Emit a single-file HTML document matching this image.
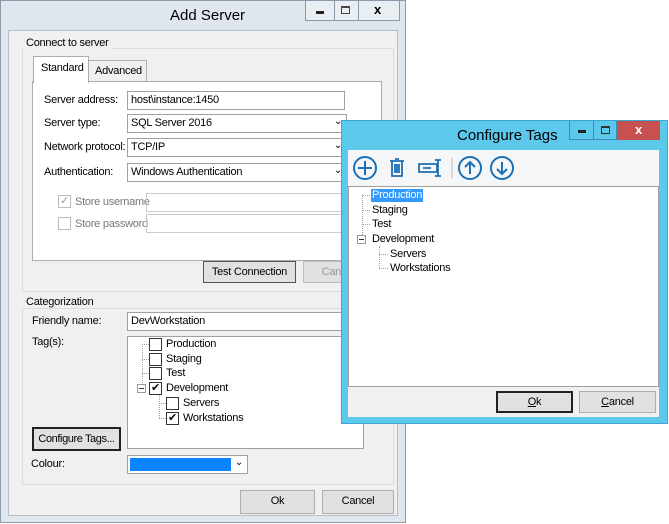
<!DOCTYPE html>
<html><head><meta charset="utf-8"><style>
*{box-sizing:border-box;margin:0;padding:0}
body{width:669px;height:524px;background:#fff;position:relative;overflow:hidden;font-family:"Liberation Sans",sans-serif;font-size:11px;letter-spacing:-0.25px;color:#000}
.a{position:absolute;white-space:nowrap}
.tb{position:absolute;background:#fff;border:1px solid #a0a0a0;height:19px;padding:2px 3px;white-space:nowrap;overflow:hidden}
.btn{position:absolute;background:#e1e1e1;border:1px solid #adadad;text-align:center;line-height:20px;white-space:nowrap}
.cb{position:absolute;width:13px;height:13px;border:1px solid #333;background:#fff;font-size:11px;line-height:11px;text-align:center}
.chev{position:absolute;right:4px;top:1px;font-size:10px}
.dot{position:absolute;border-color:#a0a0a0;border-style:dotted;border-width:0}
</style></head><body>
<!-- Add Server -->
<div class="a" style="left:0;top:0;width:406px;height:523px;background:#dfe6ee;border:1px solid #8a99aa"></div>
<div class="a" style="left:170px;top:7px;font-size:15px;letter-spacing:0">Add Server</div>
<div class="a" style="left:305px;top:0px;width:95px;height:21px;border:1px solid #8a99aa;background:#e9eef3"></div>
<div class="a" style="left:334px;top:0px;width:1px;height:21px;background:#8a99aa"></div>
<div class="a" style="left:358px;top:0px;width:1px;height:21px;background:#8a99aa"></div>
<div class="a" style="left:316px;top:11px;width:8px;height:3px;background:#222"></div>
<div class="a" style="left:341px;top:6px;width:9px;height:8px;border:1px solid #444;border-top-width:2px"></div>
<div class="a" style="left:374px;top:2px;font-size:13px;font-weight:bold">x</div>
<div class="a" style="left:8px;top:30px;width:390px;height:486px;background:#f0f0f0;border:1px solid #b5bfca"></div>
<div class="a" style="left:22px;top:48px;width:372px;height:244px;border:1px solid #dcdcdc"></div>
<div class="a" style="left:24px;top:37px;background:#f0f0f0;padding:0 2px">Connect to server</div>
<div class="a" style="left:32px;top:81px;width:350px;height:180px;background:#fff;border:1px solid #adadad"></div>
<div class="a" style="left:88px;top:60px;width:59px;height:22px;background:#f0f0f0;border:1px solid #adadad;padding:4px 0 0 6px">Advanced</div>
<div class="a" style="left:33px;top:56px;width:56px;height:27px;background:#fff;border:1px solid #adadad;border-bottom:none;padding:5px 0 0 7px">Standard</div>
<div class="a" style="left:44px;top:94px">Server address:</div>
<div class="tb" style="left:127px;top:91px;width:218px">host\instance:1450</div>
<div class="a" style="left:44px;top:117px">Server type:</div>
<div class="tb" style="left:127px;top:114px;width:220px">SQL Server 2016<span class="chev">&#8964;</span></div>
<div class="a" style="left:44px;top:141px">Network protocol:</div>
<div class="tb" style="left:127px;top:138px;width:220px">TCP/IP<span class="chev">&#8964;</span></div>
<div class="a" style="left:44px;top:166px">Authentication:</div>
<div class="tb" style="left:127px;top:163px;width:220px">Windows Authentication<span class="chev">&#8964;</span></div>
<div class="cb" style="left:58px;top:195px;border-color:#bbb;color:#999">&#10003;</div>
<div class="a" style="left:75px;top:196px;color:#777">Store username</div>
<div class="a" style="left:146px;top:193px;width:210px;height:19px;border:1px solid #ccc"></div>
<div class="cb" style="left:58px;top:217px;border-color:#bbb"></div>
<div class="a" style="left:75px;top:218px;color:#777">Store password</div>
<div class="a" style="left:146px;top:214px;width:210px;height:19px;border:1px solid #ccc"></div>
<div class="btn" style="left:203px;top:261px;width:93px;height:22px;border-color:#555">Test Connection</div>
<div class="btn" style="left:303px;top:261px;width:70px;height:22px;color:#999;border-color:#bbb">Cancel</div>
<div class="a" style="left:22px;top:308px;width:372px;height:177px;border:1px solid #dcdcdc"></div>
<div class="a" style="left:24px;top:296px;background:#f0f0f0;padding:0 2px">Categorization</div>
<div class="a" style="left:32px;top:315px">Friendly name:</div>
<div class="tb" style="left:127px;top:312px;width:230px">DevWorkstation</div>
<div class="a" style="left:32px;top:336px">Tag(s):</div>
<div class="a" style="left:127px;top:336px;width:237px;height:113px;background:#fff;border:1px solid #a0a0a0"></div>
<div class="dot" style="left:142px;top:344px;height:45px;border-left-width:1px"></div>
<div class="dot" style="left:142px;top:344px;width:7px;border-top-width:1px"></div>
<div class="dot" style="left:142px;top:359px;width:7px;border-top-width:1px"></div>
<div class="dot" style="left:142px;top:373px;width:7px;border-top-width:1px"></div>
<div class="dot" style="left:159px;top:395px;height:23px;border-left-width:1px"></div>
<div class="dot" style="left:159px;top:403px;width:7px;border-top-width:1px"></div>
<div class="dot" style="left:159px;top:418px;width:7px;border-top-width:1px"></div>
<div class="a" style="left:137px;top:384px;width:9px;height:9px;border:1px solid #999;background:#fff"><div style="margin:3px 1px;height:1px;background:#333"></div></div>
<div class="cb" style="left:149px;top:338px"></div><div class="a" style="left:166px;top:338px">Production</div>
<div class="cb" style="left:149px;top:353px"></div><div class="a" style="left:166px;top:353px">Staging</div>
<div class="cb" style="left:149px;top:367px"></div><div class="a" style="left:166px;top:367px">Test</div>
<div class="cb" style="left:149px;top:382px">&#10004;</div><div class="a" style="left:166px;top:382px">Development</div>
<div class="cb" style="left:166px;top:397px"></div><div class="a" style="left:183px;top:397px">Servers</div>
<div class="cb" style="left:166px;top:412px">&#10004;</div><div class="a" style="left:183px;top:412px">Workstations</div>
<div class="btn" style="left:32px;top:427px;width:89px;height:24px;border:2px solid #222;line-height:20px;letter-spacing:-0.4px">Configure Tags...</div>
<div class="a" style="left:31px;top:458px">Colour:</div>
<div class="a" style="left:127px;top:455px;width:121px;height:19px;background:#fff;border:1px solid #a0a0a0"><div style="position:absolute;left:2px;top:2px;width:101px;height:13px;background:#0a84ff"></div><span class="chev" style="top:1px">&#8964;</span></div>
<div class="btn" style="left:240px;top:490px;width:75px;height:24px">Ok</div>
<div class="btn" style="left:322px;top:490px;width:72px;height:24px">Cancel</div>

<!-- Configure Tags -->
<div class="a" style="left:341px;top:120px;width:327px;height:304px;background:#5bc8ec;border:1px solid #3aa7d0"></div>
<div class="a" style="left:457px;top:127px;font-size:15px;letter-spacing:0">Configure Tags</div>
<div class="a" style="left:569px;top:121px;width:48px;height:19px;border:1px solid #3a8fb8;border-top:none"></div>
<div class="a" style="left:593px;top:121px;width:1px;height:19px;background:#3a8fb8"></div>
<div class="a" style="left:578px;top:130px;width:8px;height:3px;background:#222"></div>
<div class="a" style="left:601px;top:126px;width:9px;height:8px;border:1px solid #333;border-top-width:2px"></div>
<div class="a" style="left:617px;top:121px;width:43px;height:19px;background:#c75050;color:#fff;font-weight:bold;font-size:13px;text-align:center;line-height:17px">x</div>
<div class="a" style="left:348px;top:150px;width:311px;height:36px;background:#f5f6f7"></div>
<svg class="a" style="left:348px;top:150px" width="170" height="36" fill="none" stroke="#1c6fb4" stroke-width="2">
<circle cx="17" cy="18" r="11"/><path d="M17 11v14M10 18h14"/>
<path d="M42 11h14M44 11v15h10V11M47 9h4M47 14v9M49 14v9M51 14v9" stroke-width="1.8"/>
<path d="M71 14h18v8H71zM75 18h8M90 10v16M87 10h6M87 26h6" stroke-width="1.8"/>
<path d="M104 8v20" stroke="#bbb" stroke-width="1"/>
<circle cx="122" cy="18" r="11"/><path d="M122 24V12M117 17l5-5 5 5"/>
<circle cx="154" cy="18" r="11"/><path d="M154 12v12M149 19l5 5 5-5"/>
</svg>
<div class="a" style="left:348px;top:186px;width:311px;height:201px;background:#fff;border:1px solid #a0a0a0"></div>
<div class="dot" style="left:362px;top:195px;height:44px;border-left-width:1px"></div>
<div class="dot" style="left:362px;top:195px;width:8px;border-top-width:1px"></div>
<div class="dot" style="left:362px;top:210px;width:8px;border-top-width:1px"></div>
<div class="dot" style="left:362px;top:224px;width:8px;border-top-width:1px"></div>
<div class="dot" style="left:379px;top:246px;height:22px;border-left-width:1px"></div>
<div class="dot" style="left:379px;top:254px;width:9px;border-top-width:1px"></div>
<div class="dot" style="left:379px;top:268px;width:9px;border-top-width:1px"></div>
<div class="a" style="left:357px;top:235px;width:9px;height:9px;border:1px solid #999;background:#fff"><div style="margin:3px 1px;height:1px;background:#333"></div></div>
<div class="a" style="left:371px;top:189px;height:13px;background:#3399ff;color:#fff;line-height:13px;padding:0 1px">Production</div>
<div class="a" style="left:372px;top:204px">Staging</div>
<div class="a" style="left:372px;top:218px">Test</div>
<div class="a" style="left:372px;top:233px">Development</div>
<div class="a" style="left:390px;top:248px">Servers</div>
<div class="a" style="left:390px;top:262px">Workstations</div>
<div class="a" style="left:348px;top:387px;width:311px;height:30px;background:#f0f0f0"></div>
<div class="btn" style="left:496px;top:391px;width:77px;height:22px;border:2px solid #222;line-height:18px"><u>O</u>k</div>
<div class="btn" style="left:579px;top:391px;width:77px;height:22px"><u>C</u>ancel</div>
</body></html>
